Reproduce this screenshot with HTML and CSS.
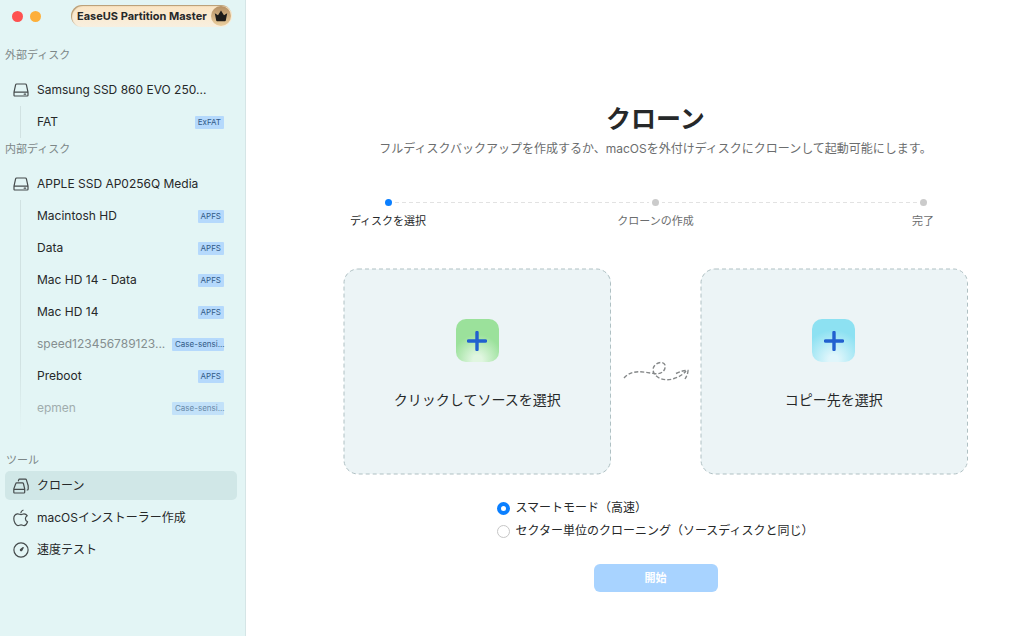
FILE: index.html
```
<!DOCTYPE html>
<html lang="ja">
<head>
<meta charset="utf-8">
<meta name="viewport" content="width=device-width, initial-scale=1">
<title>EaseUS Partition Master</title>
<link rel="stylesheet" href="styles.css">
</head>
<body>
<svg class="defs" aria-hidden="true">
  <symbol id="disk" viewBox="0 0 16 16"><path d="M3.600 2h8.800q.8 0 1 .8L15 10.200v3q0 .8-.8.8H1.800q-.8 0-.8-.8v-3L2.600 2.800q.2-.8 1-.8zM1.200 10.200h13.600M11.200 12.200h1.400"/></symbol>
</svg>
<div class="app">
  <aside class="sidebar">
    <header class="titlebar">
      <button class="light red" aria-label="閉じる"></button>
      <button class="light yellow" aria-label="しまう"></button>
      <div class="product">
        <span>EaseUS Partition Master</span>
        <svg class="crown" viewBox="0 0 20 20" aria-hidden="true">
          <defs><linearGradient id="gold" x2="0" y2="1"><stop stop-color="#b58f63"/><stop offset="1" stop-color="#ebcf9f"/></linearGradient></defs>
          <circle cx="10" cy="10" r="10" fill="url(#gold)"/>
          <path d="M3.800 7.200l3.200 2 3-4.600 3 4.600 3.200-2-1.400 7.200q-.1.8-.9.800H6.100q-.8 0-.9-.8z" fill="#1e1c1a"/>
        </svg>
      </div>
    </header>

    <section>
      <h2 class="group-title">外部ディスク</h2>
      <button class="row"><svg class="icon"><use href="#disk"/></svg>Samsung SSD 860 EVO 250...</button>
      <ul class="volumes">
        <li><button class="volume"><span>FAT</span><span class="tag">ExFAT</span></button></li>
      </ul>
    </section>

    <section class="internal">
      <h2 class="group-title">内部ディスク</h2>
      <button class="row"><svg class="icon"><use href="#disk"/></svg>APPLE SSD AP0256Q Media</button>
      <ul class="volumes fading">
        <li><button class="volume"><span>Macintosh HD</span><span class="tag">APFS</span></button></li>
        <li><button class="volume"><span>Data</span><span class="tag">APFS</span></button></li>
        <li><button class="volume"><span>Mac HD 14 - Data</span><span class="tag">APFS</span></button></li>
        <li><button class="volume"><span>Mac HD 14</span><span class="tag">APFS</span></button></li>
        <li><button class="volume muted"><span>speed123456789123...</span><span class="tag">Case-sensi...</span></button></li>
        <li><button class="volume"><span>Preboot</span><span class="tag">APFS</span></button></li>
        <li><button class="volume muted faded"><span>epmen</span><span class="tag">Case-sensi...</span></button></li>
      </ul>
    </section>

    <nav class="tools">
      <h2 class="group-title">ツール</h2>
      <button class="row active">
        <svg class="icon" viewBox="0 0 16 16"><path d="M3.700 4.800h5.800q.7 0 .9.700l1.300 5.400v3.300q0 .8-.8.800H1.600q-.8 0-.8-.8v-3.300l2-5.400q.2-.7.900-.7zM1 11.400h10.500M5.400 2.900l.3-1q.2-.7.900-.7h5.900q.7 0 .9.700L15.200 7.800v3.200q0 1-1 1"/></svg>クローン
      </button>
      <button class="row">
        <svg class="icon" viewBox="0 0 16 16"><path d="M8.100 4.600C6.700 4.600 5.900 3.800 4.500 3.900 2.200 4.200.8 6.300.8 8.800c0 3.200 2.200 6.800 4.200 6.800 1.200 0 1.700-.7 3.100-.7s1.800.7 3 .7c1.500 0 2.800-1.900 3.500-3.800-1.400-.6-2.200-1.700-2.200-3.100 0-1.200.7-2.300 1.800-3C13.400 4.500 12.200 3.900 11 3.900c-1.200 0-1.800.7-2.900.7zM7.900 2.800Q8 .8 10 .2"/></svg>macOSインストーラー作成
      </button>
      <button class="row">
        <svg class="icon" viewBox="0 0 16 16"><circle cx="8" cy="8" r="7.100"/><path d="M10.200 5.600L8.700 8.500a.7.700 0 1 1-1.100-1z" fill="#454b4c"/></svg>速度テスト
      </button>
    </nav>
  </aside>

  <main class="main">
    <h1 class="title">クローン</h1>
    <p class="subtitle">フルディスクバックアップを作成するか、macOSを外付けディスクにクローンして起動可能にします。</p>

    <ol class="steps">
      <li class="step current">ディスクを選択</li>
      <li class="step">クローンの作成</li>
      <li class="step">完了</li>
    </ol>

    <div class="pickers">
      <button class="picker">
        <svg class="outline" aria-hidden="true"><rect x="0" y="0" width="100%" height="100%" rx="14"/></svg>
        <span class="plus green"><svg viewBox="0 0 20 20"><path d="M10 1.500v17M1.500 10h17"/></svg></span>
        <span>クリックしてソースを選択</span>
      </button>
      <svg class="arrow" viewBox="0 0 66 22" aria-hidden="true">
        <path d="M1 17C9 8 20 11 31 12.500C40 14 43 8 42 4C40-1 30 2 30 9C31 17 42 21 51 17.500Q59 15 63 10"/><path d="M53 12.500Q60 9 65 9.500Q65 13 62 18"/>
      </svg>
      <button class="picker">
        <svg class="outline" aria-hidden="true"><rect x="0" y="0" width="100%" height="100%" rx="14"/></svg>
        <span class="plus blue"><svg viewBox="0 0 20 20"><path d="M10 1.500v17M1.500 10h17"/></svg></span>
        <span>コピー先を選択</span>
      </button>
    </div>

    <div class="modes">
      <label class="mode"><input type="radio" name="mode" checked>スマートモード（高速）</label>
      <label class="mode"><input type="radio" name="mode">セクター単位のクローニング（ソースディスクと同じ）</label>
    </div>
    <button class="start" disabled>開始</button>
  </main>
</div>
</body>
</html>
```
FILE: styles.css
```
* { box-sizing: border-box; }
body {
  margin: 0;
  background: #fff;
  color: #262829;
  font: 12px/16px Inter, "Noto Sans CJK JP", sans-serif;
}
button { border: 0; padding: 0; background: none; font: inherit; color: inherit; text-align: left; }
h1, h2, p, ul, ol { margin: 0; padding: 0; font-weight: 400; list-style: none; }
.defs { display: none; }
.app { display: grid; grid-template-columns: 246px 1fr; min-height: 100vh; }

.sidebar { background: #e3f5f5; border-right: 1px solid #d5e5e6; }
.titlebar { display: flex; align-items: center; height: 32px; padding-left: 12px; gap: 7px; }
.light { width: 11px; height: 11px; border-radius: 50%; }
.red { background: #fe5150; }
.yellow { background: #fdaf3a; }
.product {
  display: flex;
  align-items: center;
  justify-content: space-between;
  width: 161px;
  height: 22px;
  margin-left: 23px;
  padding: 0 1px 0 6px;
  border-radius: 11px;
  background: linear-gradient(#fbe5c3, #f8efdf);
  box-shadow: inset 1px 1px 1px #b59b74;
  font-size: 11px;
  font-weight: 700;
  white-space: nowrap;
}
.crown { width: 20px; height: 20px; }
.group-title { padding: 0 5px; font-size: 11px; line-height: 16px; color: #7d8788; }
.titlebar + section { padding-top: 15px; }
.row { display: flex; align-items: center; gap: 8px; width: 100%; height: 32px; padding-left: 13px; white-space: nowrap; }
section .row { margin-top: 11px; }
.icon { flex: none; width: 16px; height: 16px; fill: none; stroke: #454b4c; stroke-width: 1.2; stroke-linecap: round; stroke-linejoin: round; overflow: visible; }
.volumes { margin-left: 20px; border-left: 1px solid #d1e2e2; }
.volumes.fading { padding-bottom: 8px; border-image: linear-gradient(#d1e2e2 70%, #e3f5f5) 1; }
.volume { display: flex; align-items: center; justify-content: space-between; width: 100%; height: 32px; padding: 0 21px 0 16px; white-space: nowrap; }
.tag { max-width: 52px; height: 13px; padding: 0 3px; border-radius: 1px; background: #b5d9fc; color: #315a86; font-size: 8px; line-height: 13px; }
.muted > span:first-child { color: #858f90; }
.faded { opacity: 0.7; }
.internal { padding-top: 3px; }
.tools { padding: 20px 8px 0 5px; }
.tools .group-title { padding: 0 0 0 1px; margin-bottom: 3px; }
.tools .row { padding-left: 8px; }
.tools .active { height: 29px; margin-bottom: 2px; border-radius: 5px; background: #d0e7e7; }

.main { display: flex; flex-direction: column; align-items: center; padding: 100px 57px 40px 98px; }
.title { font-size: 25px; line-height: 38px; font-weight: 700; }
.subtitle { margin-top: 3px; color: #6b6d6e; }
.steps {
  display: flex;
  justify-content: space-between;
  width: 100%;
  margin-top: 42px;
  background: repeating-linear-gradient(90deg, #e2e2e2 0 4px, transparent 4px 7px) 50% 3px / calc(100% - 88px) 1px no-repeat;
}
.step { display: flex; flex-direction: column; align-items: center; gap: 7px; width: 88px; color: #6b6d6e; font-size: 11px; line-height: 16px; }
.step::before { content: ""; width: 7px; height: 7px; border-radius: 50%; background: #cbcbcb; box-shadow: 0 0 0 3px #fff; }
.current { color: #262829; }
.current::before { background: #0a7fff; }

.pickers { display: grid; grid-template-columns: 1fr 66px 1fr; column-gap: 12px; align-items: center; width: 100%; margin-top: 40px; }
.picker {
  position: relative;
  display: flex;
  flex-direction: column;
  align-items: center;
  gap: 28px;
  padding: 50px 0 64px;
  border-radius: 14px;
  background: #ecf4f6;
  font-size: 14px;
  line-height: 20px;
}
.outline { position: absolute; inset: 0; width: 100%; height: 100%; overflow: visible; }
.outline rect { fill: none; stroke: #afc0c3; stroke-width: 1; stroke-dasharray: 4 3; }
.plus { display: grid; place-items: center; width: 43px; height: 43px; border-radius: 10px; }
.plus svg { width: 20px; height: 20px; stroke: #2160cf; stroke-width: 3.4; stroke-linecap: round; }
.green { background: radial-gradient(circle at 50% 95%, #e0f6e0 0 10%, #9be19b 55%); }
.blue { background: radial-gradient(circle at 50% 95%, #e0f6fb 0 10%, #8de1f2 65%); }
.arrow { width: 66px; height: 22px; fill: none; stroke: #858889; stroke-width: 1.4; stroke-dasharray: 4 2; overflow: visible; }

.modes { display: grid; gap: 7px; margin-top: 26px; }
.mode { display: flex; align-items: center; gap: 5px; white-space: nowrap; }
.mode input { appearance: none; width: 13px; height: 13px; margin: 0; border: 1px solid #c6c6c6; border-radius: 50%; background: #fff; }
.mode input:checked { border: 4px solid #0a7fff; }
.start { width: 124px; height: 28px; margin-top: 25px; border-radius: 6px; background: #a8d3ff; color: #fff; font-size: 11px; font-weight: 700; text-align: center; }
```
